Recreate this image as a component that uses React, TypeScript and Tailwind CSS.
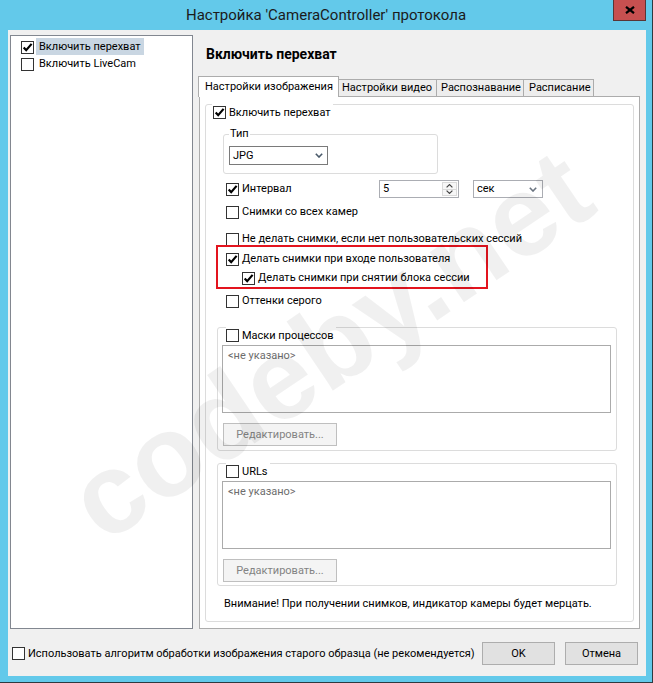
import React from "react";

function Check({ checked = false }: { checked?: boolean }) {
  return (
    <span className="flex h-[13px] w-[13px] shrink-0 items-center justify-center border border-[#333333] bg-white">
      {checked && (
        <svg width="11" height="11" viewBox="0 0 11 11">
          <path
            d="M1.7 5.4 L4.2 8.2 L9.6 1.9"
            fill="none"
            stroke="#000"
            strokeWidth="2.2"
            strokeLinecap="butt"
            strokeLinejoin="miter"
          />
        </svg>
      )}
    </span>
  );
}

function CheckRow({
  checked,
  label,
  className,
}: {
  checked?: boolean;
  label: string;
  className: string;
}) {
  return (
    <div className={className}>
      <Check checked={checked} />
      <span className="ml-[3px] whitespace-nowrap">{label}</span>
    </div>
  );
}

function Chevron({ color = "#5A5A5A" }: { color?: string }) {
  return (
    <svg width="8" height="5" viewBox="0 0 8 5">
      <path d="M0.8 0.8 L4 4 L7.2 0.8" fill="none" stroke={color} strokeWidth="1.6" />
    </svg>
  );
}

function ListBlock({ title }: { title: string }) {
  return (
    <>
      <div className="-mt-[1px] ml-[8px] flex h-[17px] items-center self-start bg-white pr-[2px]">
        <Check />
        <span className="ml-[3px] whitespace-nowrap">{title}</span>
      </div>
      <div className="ml-[4px] mt-[1px] h-[68px] w-[389px] border border-[#ABABAB] bg-white pl-[5px] pt-[2px] text-[#6D6D6D]">
        &lt;не указано&gt;
      </div>
      <div className="ml-[5px] mt-[10px] flex h-[23px] w-[114px] items-center justify-center border border-[#BFBFBF] bg-[#F4F4F4] text-[#838383]">
        Редактировать...
      </div>
    </>
  );
}

export default function App() {
  return (
    <div className="relative h-[683px] w-[653px] overflow-hidden border-b border-r border-[#2E3A40] bg-[#63C9EA] font-['Roboto',sans-serif] text-[11px] leading-[16px] text-black">
      {/* title bar */}
      <div className="relative flex h-[30px] items-center justify-center">
        <span className="text-[15px] leading-[20px] text-[#1B1B1B]">
          Настройка 'CameraController' протокола
        </span>
        <div className="absolute right-[6px] top-0 flex h-[21px] w-[33px] items-center justify-center border border-t-0 border-[#5A3535] bg-[#C75050]">
          <svg width="10" height="8" viewBox="0 0 10 8">
            <path d="M1 0.8 L9 7.2 M9 0.8 L1 7.2" stroke="#000" strokeWidth="2.2" />
          </svg>
        </div>
      </div>

      {/* client area */}
      <div className="ml-[8px] mr-[6px] flex h-[646px] flex-col bg-[#F0F0F0] pl-[2px] pt-[5px]">
        <div className="flex h-[594px] pr-[6px]">
          {/* left tree */}
          <div className="w-[183px] shrink-0 border border-[#828790] bg-white pt-[2px]">
            <div className="flex h-[17px] pl-[10px]">
              <div className="mt-[3px]">
                <Check checked />
              </div>
              <span className="ml-[2px] flex h-[17px] items-center bg-[#C9D6E2] px-[3px] whitespace-nowrap">
                Включить перехват
              </span>
            </div>
            <div className="flex h-[17px] pl-[10px]">
              <div className="mt-[3px]">
                <Check />
              </div>
              <span className="ml-[2px] flex h-[17px] items-center px-[3px] whitespace-nowrap">
                Включить LiveCam
              </span>
            </div>
          </div>

          {/* right column */}
          <div className="ml-[5px] flex flex-1 flex-col">
            <div className="h-[41px] pl-[8px] pt-[11px] text-[14px] font-bold leading-[16px]">
              Включить перехват
            </div>
            <div className="flex h-[20px] items-end">
              <div className="relative z-10 -mb-[1px] flex h-[21px] w-[141px] items-center border border-b-0 border-[#ACACAC] bg-white pl-[6px] whitespace-nowrap">
                Настройки изображения
              </div>
              <div className="-ml-[1px] flex h-[17px] w-[99px] items-center border border-b-0 border-[#ACACAC] bg-[#EDEDED] pl-[3px] whitespace-nowrap">
                Настройки видео
              </div>
              <div className="-ml-[1px] flex h-[17px] w-[88px] items-center border border-b-0 border-[#ACACAC] bg-[#EDEDED] pl-[4px] whitespace-nowrap">
                Распознавание
              </div>
              <div className="-ml-[1px] flex h-[17px] w-[71px] items-center border border-b-0 border-[#ACACAC] bg-[#EDEDED] pl-[5px] whitespace-nowrap">
                Расписание
              </div>
            </div>
            <div className="ml-[1px] flex flex-1 flex-col border border-[#ACACAC] bg-white px-[5px] pb-[6px] pt-[7px]">
              <div className="flex flex-1 flex-col rounded-[3px] border border-[#DCDCDC]">
                {/* header checkbox */}
                <div className="-mt-[1px] ml-[6px] flex h-[17px] items-center self-start bg-white pl-[1px] pr-[2px]">
                  <Check checked />
                  <span className="ml-[3px] whitespace-nowrap">Включить перехват</span>
                </div>

                {/* Тип */}
                <div className="ml-[17px] mt-[13px] flex h-[40px] w-[215px] flex-col rounded-[3px] border border-[#DCDCDC]">
                  <span className="-mt-[9px] ml-[5px] self-start bg-white px-[1px]">Тип</span>
                  <div className="ml-[5px] mt-[4px] flex h-[19px] w-[99px] items-center justify-between border border-[#7A7A7A] bg-white pl-[3px] pr-[4px]">
                    <span>JPG</span>
                    <Chevron color="#4A5A6A" />
                  </div>
                </div>

                {/* Интервал */}
                <div className="ml-[20px] mt-[6px] flex h-[18px] items-center">
                  <CheckRow checked label="Интервал" className="flex w-[153px] items-center" />
                  <div className="flex h-[18px] w-[80px] border border-[#ABADB3] bg-white">
                    <span className="flex-1 pl-[3px] leading-[16px]">5</span>
                    <div className="my-[1px] mr-[1px] flex w-[15px] flex-col">
                      <div className="flex flex-1 items-center justify-center border border-[#DADADA] bg-[#F7F7F7]">
                        <svg width="7" height="4" viewBox="0 0 7 4">
                          <path d="M0.6 3.4 L3.5 0.6 L6.4 3.4" fill="none" stroke="#444" strokeWidth="1.2" />
                        </svg>
                      </div>
                      <div className="flex flex-1 items-center justify-center border border-t-0 border-[#DADADA] bg-[#F7F7F7]">
                        <svg width="7" height="4" viewBox="0 0 7 4">
                          <path d="M0.6 0.6 L3.5 3.4 L6.4 0.6" fill="none" stroke="#444" strokeWidth="1.2" />
                        </svg>
                      </div>
                    </div>
                  </div>
                  <div className="ml-[14px] flex h-[18px] w-[70px] items-center justify-between border border-[#ABADB3] bg-white pl-[3px] pr-[5px]">
                    <span>сек</span>
                    <Chevron color="#6A7480" />
                  </div>
                </div>

                <CheckRow label="Снимки со всех камер" className="ml-[20px] mt-[6px] flex h-[16px] items-center" />
                <CheckRow
                  label="Не делать снимки, если нет пользовательских сессий"
                  className="ml-[20px] mt-[11px] flex h-[16px] items-center"
                />

                {/* red highlighted group */}
                <div className="-mt-[2px] ml-[10px] flex h-[44px] w-[272px] flex-col border-2 border-[#E3141E]">
                  <CheckRow
                    checked
                    label="Делать снимки при входе пользователя"
                    className="ml-[8px] mt-[4px] flex h-[16px] items-center"
                  />
                  <CheckRow
                    checked
                    label="Делать снимки при снятии блока сессии"
                    className="ml-[24px] mt-[3px] flex h-[16px] items-center"
                  />
                </div>

                <CheckRow label="Оттенки серого" className="ml-[20px] mt-[4px] flex h-[16px] items-center" />

                {/* Маски процессов */}
                <div className="ml-[11px] mt-[18px] flex h-[124px] w-[400px] flex-col rounded-[3px] border border-[#DCDCDC]">
                  <ListBlock title="Маски процессов" />
                </div>

                {/* URLs */}
                <div className="ml-[11px] mt-[12px] flex h-[123px] w-[400px] flex-col rounded-[3px] border border-[#DCDCDC]">
                  <ListBlock title="URLs" />
                </div>

                <div className="ml-[18px] mt-[10px] whitespace-nowrap">
                  Внимание! При получении снимков, индикатор камеры будет мерцать.
                </div>
              </div>
            </div>
          </div>
        </div>

        {/* bottom row */}
        <div className="mr-[8px] mt-[13px] flex h-[23px] items-center">
          <div className="ml-[2px] flex items-center">
            <Check />
            <span className="ml-[3px] whitespace-nowrap">
              Использовать алгоритм обработки изображения старого образца (не рекомендуется)
            </span>
          </div>
          <div className="flex-1" />
          <div className="flex h-[23px] w-[73px] items-center justify-center border border-[#ADADAD] bg-[#E1E1E1]">
            OK
          </div>
          <div className="ml-[10px] flex h-[23px] w-[73px] items-center justify-center border border-[#ADADAD] bg-[#E1E1E1]">
            Отмена
          </div>
        </div>
      </div>

      {/* watermark */}
      <div className="pointer-events-none absolute left-[330px] top-[345px] z-20 -translate-x-1/2 -translate-y-1/2 -rotate-[34deg] whitespace-nowrap font-['Liberation_Sans',sans-serif] text-[115px] font-bold leading-none text-black/[0.06]">
        codeby.net
      </div>
    </div>
  );
}
